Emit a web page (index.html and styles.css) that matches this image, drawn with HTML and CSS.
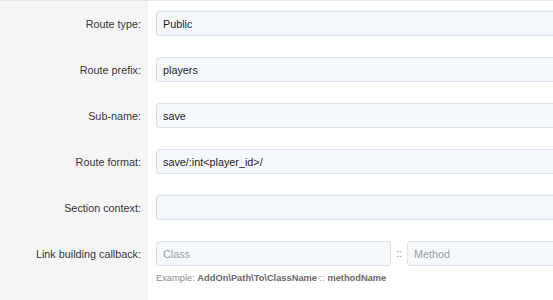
FILE: index.html
```html
<!DOCTYPE html>
<html>
<head>
<meta charset="utf-8">
<link rel="stylesheet" href="styles.css">
</head>
<body>
<form class="form">
  <div class="label">Route type:</div>
  <div class="field"><input class="input" type="text" value="Public"></div>

  <div class="label">Route prefix:</div>
  <div class="field"><input class="input" type="text" value="players"></div>

  <div class="label">Sub-name:</div>
  <div class="field"><input class="input" type="text" value="save"></div>

  <div class="label">Route format:</div>
  <div class="field"><input class="input" type="text" value="save/:int&lt;player_id&gt;/"></div>

  <div class="label">Section context:</div>
  <div class="field"><input class="input" type="text" value=""></div>

  <div class="label label-last">Link building callback:</div>
  <div class="field field-last">
    <div class="callback">
      <input class="input input-class" type="text" placeholder="Class">
      <span class="sep">::</span>
      <input class="input input-method" type="text" placeholder="Method">
    </div>
    <div class="hint">Example: <b>AddOn\Path\To\ClassName</b> :: <b>methodName</b></div>
  </div>
</form>
</body>
</html>
```

FILE: styles.css
```css
html, body {
  margin: 0;
  padding: 0;
  background: #ffffff;
}
body {
  font-family: "Liberation Sans", Arial, Helvetica, sans-serif;
  width: 553px;
  height: 300px;
  overflow: hidden;
}
.form {
  display: grid;
  grid-template-columns: 148px 1fr;
  grid-template-rows: 46px 46px 46px 46px 46px 1fr;
  height: 300px;
  border-top: 1px solid #e6e6e6;
  box-sizing: border-box;
  margin: 0;
}
.label {
  background: #f5f5f5;
  text-align: right;
  padding: 17px 7px 0 0;
  font-size: 10.8px;
  color: #363636;
  line-height: 12px;
}
.field {
  padding: 10px 0 0 8px;
  overflow: hidden;
}
.input {
  display: block;
  box-sizing: border-box;
  width: 420px;
  height: 25px;
  margin: 0;
  padding: 0 6px;
  border: 1px solid #dae1e8;
  border-radius: 3px;
  background: #f4f8fc;
  font-family: "Liberation Sans", Arial, Helvetica, sans-serif;
  font-size: 10.8px;
  color: #1d1d1d;
  outline: none;
}
.input::placeholder {
  color: #9c9c9c;
}
.callback {
  display: flex;
  align-items: center;
}
.input-class {
  width: 235px;
  flex: none;
}
.sep {
  flex: none;
  width: 16px;
  text-align: center;
  font-size: 10px;
  color: #8a8a8a;
}
.input-method {
  width: 200px;
  flex: none;
}
.hint {
  margin-top: 7px;
  font-size: 9.3px;
  color: #8c8c8c;
}
.hint b {
  color: #6a6a6a;
  font-weight: bold;
}
```
